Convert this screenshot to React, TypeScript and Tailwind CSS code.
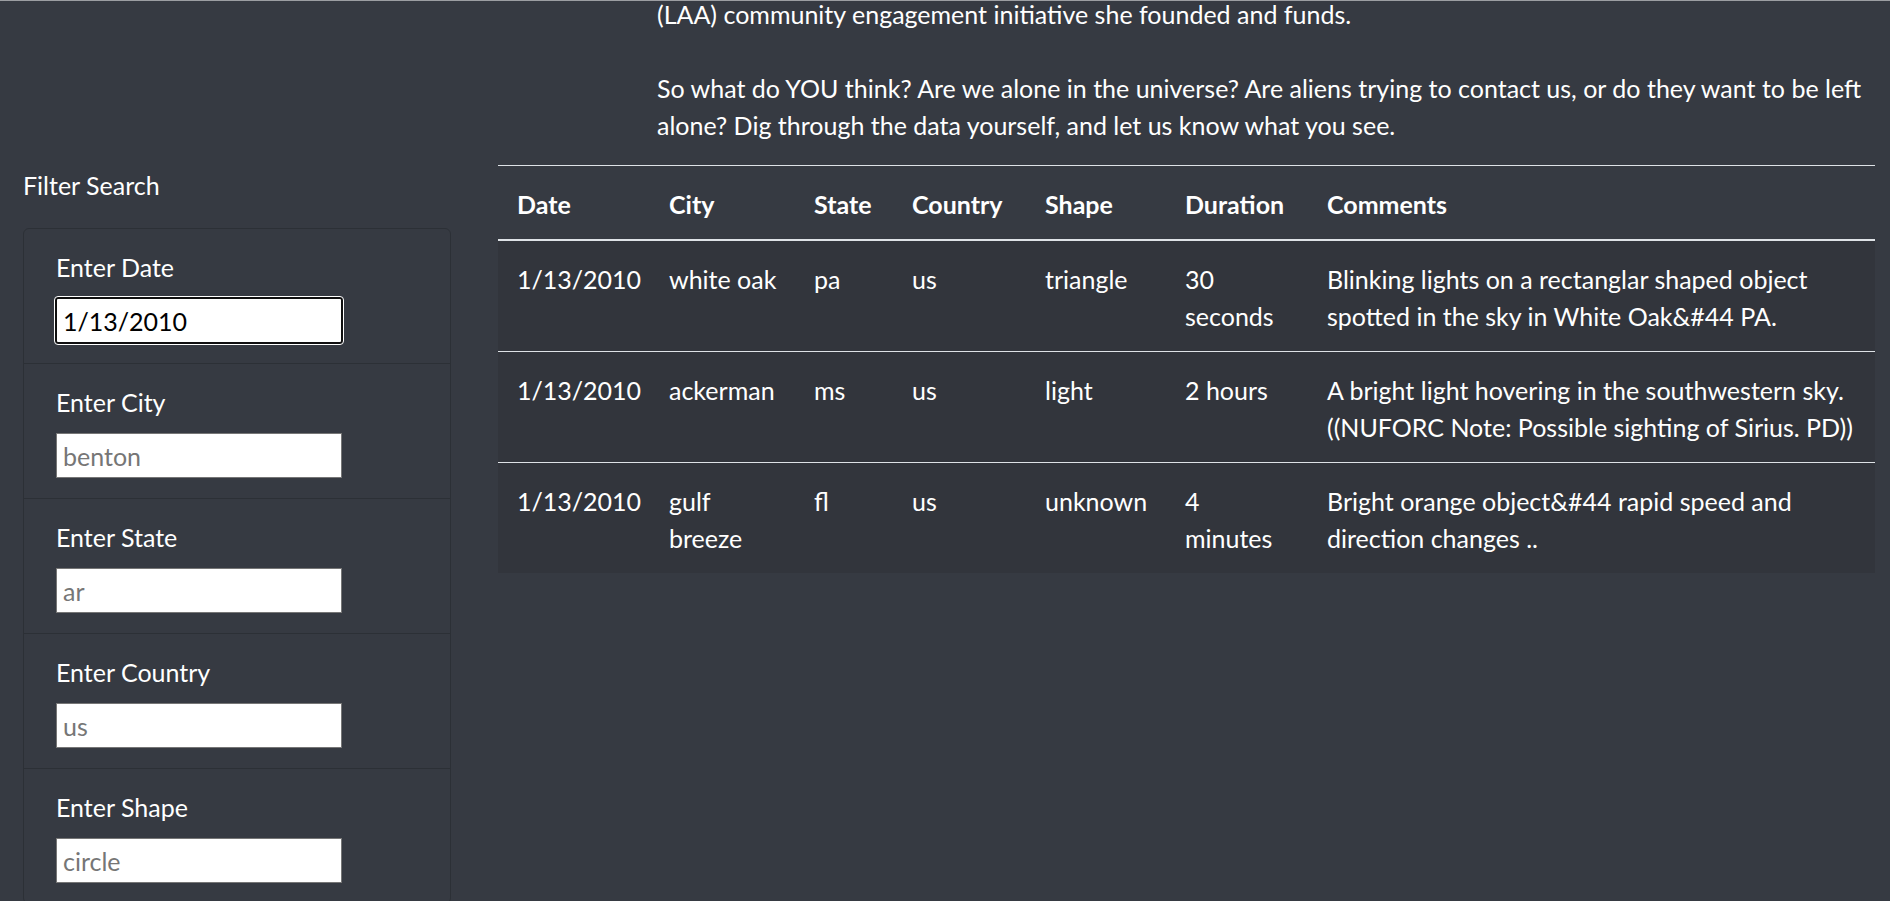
import React from 'react';

type Sighting = {
  datetime: string;
  city: string;
  state: string;
  country: string;
  shape: string;
  duration: string;
  comments: string;
};

const sightings: Sighting[] = [
  {
    datetime: '1/13/2010',
    city: 'white oak',
    state: 'pa',
    country: 'us',
    shape: 'triangle',
    duration: '30 seconds',
    comments: 'Blinking lights on a rectanglar shaped object spotted in the sky in White Oak&#44 PA.',
  },
  {
    datetime: '1/13/2010',
    city: 'ackerman',
    state: 'ms',
    country: 'us',
    shape: 'light',
    duration: '2 hours',
    comments: 'A bright light hovering in the southwestern sky. ((NUFORC Note: Possible sighting of Sirius. PD))',
  },
  {
    datetime: '1/13/2010',
    city: 'gulf breeze',
    state: 'fl',
    country: 'us',
    shape: 'unknown',
    duration: '4 minutes',
    comments: 'Bright orange object&#44 rapid speed and direction changes ..',
  },
];

const filters = [
  { id: 'datetime', label: 'Enter Date', placeholder: '1/13/2010', value: '1/13/2010' },
  { id: 'city', label: 'Enter City', placeholder: 'benton' },
  { id: 'state', label: 'Enter State', placeholder: 'ar' },
  { id: 'country', label: 'Enter Country', placeholder: 'us' },
  { id: 'shape', label: 'Enter Shape', placeholder: 'circle' },
];

// fixed widths so the wraps land where they do in the original
const columns = [
  { key: 'datetime', label: 'Date', width: 'w-[152px]', cell: 'px-[19px]' },
  { key: 'city', label: 'City', width: 'w-[145px]', cell: 'pl-[19px] pr-[8px]' },
  { key: 'state', label: 'State', width: 'w-[98px]', cell: 'px-[19px]' },
  { key: 'country', label: 'Country', width: 'w-[133px]', cell: 'px-[19px]' },
  { key: 'shape', label: 'Shape', width: 'w-[140px]', cell: 'px-[19px]' },
  { key: 'duration', label: 'Duration', width: 'w-[142px]', cell: 'px-[19px]' },
  { key: 'comments', label: 'Comments', width: '', cell: 'px-[19px]' },
] as const;

export default function App() {
  return (
    <div className="min-h-[901px] overflow-hidden border-t border-[#9c9ea2] bg-[#363a42] font-['Lato','Open_Sans',sans-serif] text-[25px] leading-[37px] text-white">
      <div className="pl-[657px] pr-[15px]">
        <p className="-mt-[5px] mb-[21px] whitespace-nowrap">
          (LAA) community engagement initiative she founded and funds.
          <br />
          <br />
          So what do YOU think? Are we alone in the universe? Are aliens trying to contact us, or do they want to be left
          <br />
          alone? Dig through the data yourself, and let us know what you see.
        </p>
      </div>

      <div className="flex">
        <aside className="w-[475px] shrink-0 pl-[23px] pr-[24px]">
          <div className="mb-[24px] pt-[2px]">Filter Search</div>
          <ul className="rounded-[6px] border border-[#2c3036]">
            {filters.map((f, i) => (
              <li
                key={f.id}
                className={`px-[32px] pt-[20px] pb-[21px] ${i > 0 ? 'border-t border-[#2c3036]' : ''}`}
              >
                <label htmlFor={f.id} className="mb-[12px] block">
                  {f.label}
                </label>
                {f.value ? (
                  <input
                    id={f.id}
                    type="text"
                    defaultValue={f.value}
                    className="-mb-[2px] -ml-[1px] -mt-[1px] block h-[47px] w-[288px] rounded-[3px] border-2 border-[#101010] bg-white px-[6px] text-[25px] text-black outline outline-1 outline-white"
                  />
                ) : (
                  <input
                    id={f.id}
                    type="text"
                    placeholder={f.placeholder}
                    className="-mb-[1px] block h-[45px] w-[286px] border border-[#767676] bg-white px-[6px] text-[25px] text-black placeholder:text-[#767676]"
                  />
                )}
              </li>
            ))}
          </ul>
        </aside>

        <main className="min-w-0 flex-1 pl-[23px] pr-[15px]">
          <table className="w-full table-fixed border-collapse text-left">
            <thead>
              <tr className="border-t border-[#dee2e6]">
                {columns.map((c) => (
                  <th
                    key={c.key}
                    className={`${c.width} border-b-2 border-[#dee2e6] px-[19px] pt-[20px] pb-[16px] align-top font-bold`}
                  >
                    {c.label}
                  </th>
                ))}
              </tr>
            </thead>
            <tbody className="bg-[#32353c]">
              {sightings.map((s, i) => (
                <tr key={i} className={i > 0 ? 'border-t border-[#dee2e6]' : ''}>
                  {columns.map((c) => (
                    <td key={c.key} className={`${c.cell} pt-[20px] pb-[16px] align-top`}>
                      {s[c.key]}
                    </td>
                  ))}
                </tr>
              ))}
            </tbody>
          </table>
        </main>
      </div>
    </div>
  );
}
